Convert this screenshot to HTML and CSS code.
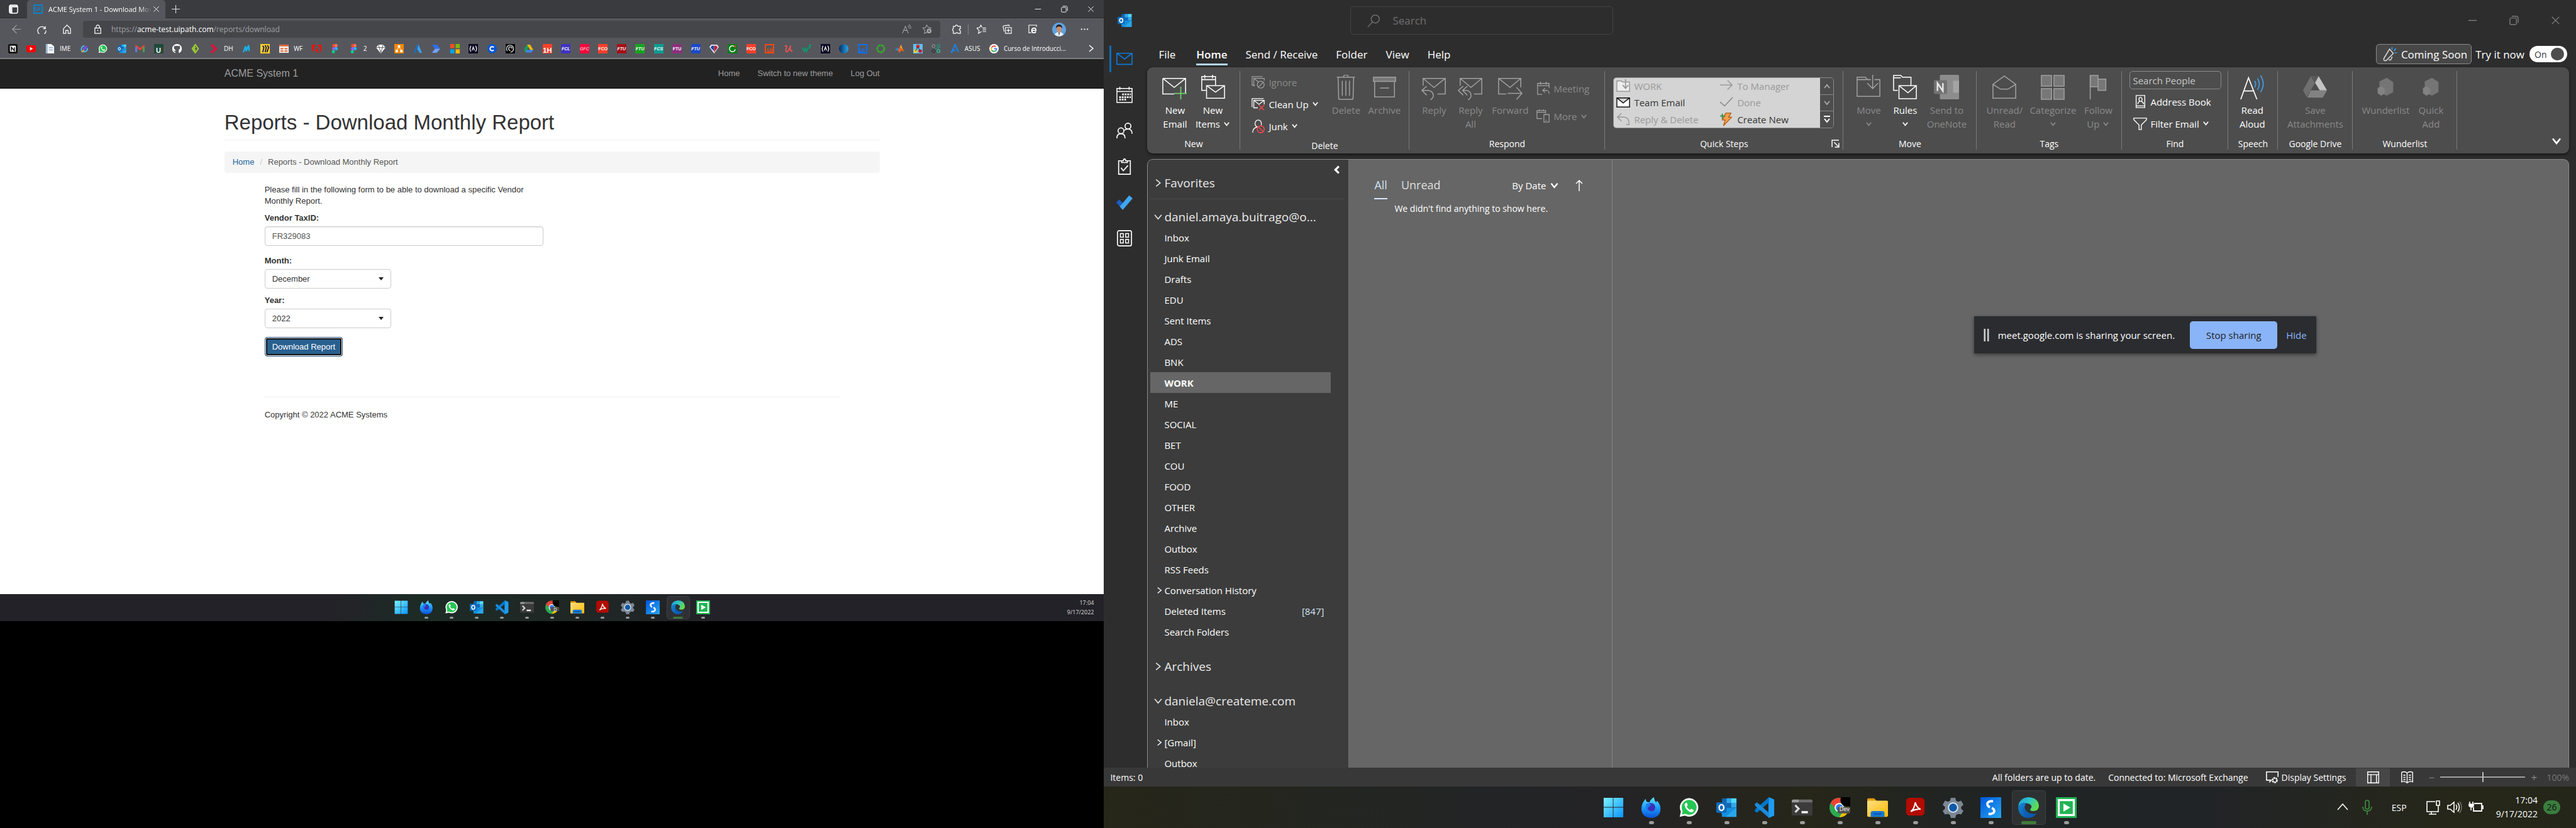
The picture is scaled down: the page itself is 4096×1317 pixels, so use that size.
FILE: index.html
```html
<!DOCTYPE html>
<html lang="en">
<head>
<meta charset="utf-8">
<title>Dual desktop</title>
<link rel="stylesheet" href="styles.css">
</head>
<body>
<svg class="sprite" aria-hidden="true">
  <defs>
    <linearGradient id="gWin" x1="0" y1="0" x2="1" y2="1"><stop offset="0" stop-color="#7cf3ff"/><stop offset="1" stop-color="#0a93ff"/></linearGradient>
    <linearGradient id="gFox" x1="0" y1="0" x2="0" y2="1"><stop offset="0" stop-color="#5fe3ff"/><stop offset=".5" stop-color="#1c9bff"/><stop offset="1" stop-color="#0a52d6"/></linearGradient>
    <linearGradient id="gFold" x1="0" y1="0" x2="1" y2="1"><stop offset="0" stop-color="#ffe083"/><stop offset="1" stop-color="#ffb900"/></linearGradient>
    <linearGradient id="gEdge" x1="0" y1="0" x2="1" y2=".5"><stop offset="0" stop-color="#1b9de2"/><stop offset=".5" stop-color="#2cc3c9"/><stop offset="1" stop-color="#62dc4c"/></linearGradient>
    <linearGradient id="gEdge2" x1="0" y1="0" x2="1" y2="1"><stop offset="0" stop-color="#1387d8"/><stop offset="1" stop-color="#0c4a9c"/></linearGradient>
    <linearGradient id="gS" x1="0" y1="0" x2="1" y2="1"><stop offset="0" stop-color="#0057e0"/><stop offset="1" stop-color="#27a7ee"/></linearGradient>
    <linearGradient id="gGlobe" x1="0" y1="0" x2="1" y2="0"><stop offset="0" stop-color="#0a2a5c"/><stop offset="1" stop-color="#25a8ec"/></linearGradient>
  </defs>
  <symbol id="t-win" viewBox="0 0 36 36"><path fill="url(#gWin)" d="M1 1h16v16H1zM18 1h17v16H18zM1 18h16v17H1zM18 18h17v17H18z"/></symbol>
  <symbol id="t-fox" viewBox="0 0 36 36"><path fill="url(#gFox)" d="M4 9l4-6 2 5 5 1q2-6 8-9 0 6 4 9l1-3q7 7 6 16-1 13-16 14Q3 35 1 22q0-8 3-13z"/><circle cx="17" cy="18" r="8" fill="#3d2fb5"/><path fill="#1a7cf0" d="M9 12q5-3 9 1l-3 3q-4 2-2 6 4 4 10 1-3 5-9 4-7-3-5-15z"/></symbol>
  <symbol id="t-wa" viewBox="0 0 36 36"><path fill="#fff" d="M2 34l2-9A16 16 0 1 1 11 32z"/><path fill="#25c653" d="M6 30l1-6a13 13 0 1 1 5 5z"/><path fill="#fff" d="M12 10q2-1 3 1l1 3-2 2q2 4 6 6l2-2 4 2q1 2-1 3-4 3-10-3-7-7-3-12z"/></symbol>
  <symbol id="t-ol" viewBox="0 0 36 36"><path fill="#1066b5" d="M10 2h25v16H10z"/><path fill="#32a9e8" d="M18 2h8v8h-8zM26 10h9v8h-9z"/><path fill="#50d9ff" d="M26 2h9v8h-9z"/><path fill="#1490df" d="M8 18h27v16H10z"/><path fill="#28a8ea" d="M35 18L16 34h19z"/><rect y="9" width="18" height="18" rx="2" fill="#0f6cbd"/><ellipse cx="9" cy="18" rx="4" ry="5" fill="none" stroke="#fff" stroke-width="2.6"/></symbol>
  <symbol id="t-code" viewBox="0 0 36 36"><path fill="#1f9cf0" d="M26 0l9 4v28l-9 4-1-1V1z"/><path fill="#0078cc" d="M26 0v9L5 27l-4-3 2-4z"/><path fill="#1a8ad9" d="M26 36v-9L5 9l-4 3 2 4z"/></symbol>
  <symbol id="t-term" viewBox="0 0 36 36"><rect y="4" width="36" height="28" rx="2" fill="#3b3b3b"/><path fill="#9c9c9c" d="M2 4h10v5H0V6z"/><path fill="#6d6d6d" d="M12 4h22l2 2v3H12z"/><path d="M6 14l6 6-6 6" fill="none" stroke="#ddd" stroke-width="3.4"/><path fill="#eee" d="M17 24h11v4H17z"/></symbol>
  <symbol id="t-chrome" viewBox="0 0 36 36"><circle cx="17" cy="18" r="17" fill="#2da94f"/><path fill="#ea4335" d="M2 10A17 17 0 0 1 32 10H17l-7 9z"/><path fill="#fbbc04" d="M32 10q5 13-5 22-4 3-10 3l8-13z"/><circle cx="17" cy="18" r="8" fill="#fff"/><circle cx="17" cy="18" r="6" fill="#3b7ded"/><rect x="14" y="17" width="22" height="11" rx="2" fill="#505050"/><circle cx="31" cy="5" r="12" fill="#000"/></symbol>
  <symbol id="t-folder" viewBox="0 0 36 36"><path fill="#e19d00" d="M0 4q0-2 2-2h10l4 4v6H0z"/><rect y="6" width="36" height="28" rx="2" fill="url(#gFold)"/><path fill="#1478d4" d="M6 34v-6q0-4 4-4h16q4 0 4 4v6z"/><path fill="#0b4f9c" d="M11 28h14v2H11z"/></symbol>
  <symbol id="t-pdf" viewBox="0 0 36 36"><rect x="2" y="1" width="32" height="31" rx="6" fill="#b30b00"/><path d="M10 25q6-4 8-16 2 9 9 12-9-1-17 4z" fill="none" stroke="#fff" stroke-width="2.2"/></symbol>
  <symbol id="t-gear" viewBox="0 0 36 36"><path fill="#7b8794" d="M14 1h8l1 5 4 2 5-2 4 7-4 4v3l4 4-4 6-5-1-4 2-1 5h-8l-1-5-4-2-5 1-4-6 4-4v-3l-4-4 4-7 5 2 4-2z"/><circle cx="18" cy="18" r="9" fill="#e4eaf0"/><circle cx="18" cy="18" r="7" fill="#0f5aa8"/></symbol>
  <symbol id="t-s" viewBox="0 0 36 36"><path fill="url(#gS)" d="M0 0h36v36H0z"/><path d="M22 7h-4q-6 1-6 5t6 6q6 2 6 6t-6 5h-4" fill="none" stroke="#fff" stroke-width="4" stroke-dasharray="20 3"/></symbol>
  <symbol id="t-edge" viewBox="0 0 36 36"><path fill="url(#gEdge)" d="M0 18Q1 1 18 0q17 1 18 15 0 9-10 9-6 0-5-3 5-6-1-9-8-4-15 0-5 3-5 6z"/><path fill="url(#gEdge2)" d="M0 18Q3 8 14 10q-5 6-1 13 6 8 19 5-6 9-17 8Q1 33 0 18z"/><path fill="#0a5cb8" d="M14 12q-7 8 0 16 5 5 17 2-8 7-16 2-11-8-1-20z"/></symbol>
  <symbol id="t-play" viewBox="0 0 36 36"><path fill="#22b455" d="M0 0h36v36H0z"/><path d="M5 5h26v26H5z" fill="none" stroke="#fff" stroke-width="3.4"/><path fill="#fff" d="M13 11l12 7-12 7z"/></symbol>

  <symbol id="r-newmail" viewBox="0 0 42 42"><path d="M1 6h38v25M1 6v26h19M1 6l19 15L39 6" fill="none" stroke="currentColor" stroke-width="1.6"/><path d="M31 20v21M20 31h21" stroke="#6fd36f" stroke-width="1.8"/></symbol>
  <symbol id="r-newitems" viewBox="0 0 42 42"><path d="M10 26H3V3h23v14M3 8h23M8 0v6M21 0v6M11 18h30v21H11zM11 18l15 11 15-11" fill="none" stroke="currentColor" stroke-width="1.6"/></symbol>
  <symbol id="r-trash" viewBox="0 0 42 42"><path d="M6 4h30M17 4q0-4 4-4t4 4M8 4l1 35q0 2 2 2h20q2 0 2-2l1-35M15 10v25M21 10v25M27 10v25" fill="none" stroke="currentColor" stroke-width="1.6"/></symbol>
  <symbol id="r-archive" viewBox="0 0 42 42"><path d="M3 4h37v7H3z" fill="#777"/><path d="M3 4h37v7H3zM5 11v26h33V11M14 22h15" fill="none" stroke="currentColor" stroke-width="1.6"/></symbol>
  <symbol id="r-reply" viewBox="0 0 42 42"><path d="M3 18V6h37v26H27M3 6l18 15L40 6M9 19L1 26l8 8M1 26h10q9 1 9 9 0 4-5 7" fill="none" stroke="currentColor" stroke-width="1.6"/></symbol>
  <symbol id="r-replyall" viewBox="0 0 42 42"><path d="M4 18V6h36v26H27M4 6l18 15L40 6M9 19L1 26l8 8M16 19l-8 7 8 8M9 26h5q8 1 8 9 0 4-5 7" fill="none" stroke="currentColor" stroke-width="1.6"/></symbol>
  <symbol id="r-forward" viewBox="0 0 42 42"><path d="M15 32H2V6h37v15M2 6l19 15L39 6M17 31h23M32 21l9 10-9 10" fill="none" stroke="currentColor" stroke-width="1.6"/></symbol>
  <symbol id="r-move" viewBox="0 0 42 42"><path d="M25 8H19l-3-4H2v32h38V8H31M2 8h16M28 0v22M19 14l9 9 9-9" fill="none" stroke="currentColor" stroke-width="1.6"/></symbol>
  <symbol id="r-rules" viewBox="0 0 42 42"><path d="M9 26H2V1h12l3 3h14v13M2 5h12M11 18h29v22H11zM11 18l15 12 14-12" fill="none" stroke="currentColor" stroke-width="1.6"/></symbol>
  <symbol id="r-note" viewBox="0 0 42 42"><rect x="10" y="0" width="32" height="41" rx="2" fill="#8d8d8d"/><path fill="#a4a4a4" d="M32 10h10v20H32z"/><rect x="0" y="9" width="22" height="23" rx="2" fill="#727272"/><path d="M6 27V14l9 13V14" fill="none" stroke="#e8e8e8" stroke-width="2.6"/></symbol>
  <symbol id="r-open" viewBox="0 0 42 42"><path d="M2 16v23h38V16L21 2zM2 16l13 8h12l13-8" fill="none" stroke="currentColor" stroke-width="1.6"/></symbol>
  <symbol id="r-cat" viewBox="0 0 42 42"><path d="M2 1h17v18H2zM23 1h17v18H23zM2 23h17v18H2zM23 23h17v18H23z" fill="#777" stroke="currentColor" stroke-width="1.6"/></symbol>
  <symbol id="r-flag" viewBox="0 0 42 42"><path d="M8 1h13v19H8zM21 7h13v19H21z" fill="#777" stroke="currentColor" stroke-width="1.6"/><path d="M8 1v40" stroke="currentColor" stroke-width="1.6"/></symbol>
  <symbol id="r-aloud" viewBox="0 0 42 42"><path d="M2 41L15 5l14 36M7 27h17" fill="none" stroke="currentColor" stroke-width="1.8"/><path d="M25 10q4 5 0 11M30 6q6 9 0 19M35 1q9 14 0 28" fill="none" stroke="#3f9fe8" stroke-width="1.8"/></symbol>
  <symbol id="r-drive" viewBox="0 0 42 42"><path fill="#6f6f6f" d="M14 2l7 12-14 23-6-11z"/><path fill="#c4c4c4" d="M27 2l14 24H29L21 13z"/><path fill="#5a5a5a" d="M14 2h13l-6 11z"/><path fill="#828282" d="M14 26h27l-7 12H8z"/></symbol>
  <symbol id="r-wund" viewBox="0 0 42 42"><path fill="#757575" d="M11 11L23 5l11 7v17l-11 6-6-3V21l-6 2z"/><path fill="#828282" d="M8 22l6-3 6 4v8l-6 4-6-4z"/></symbol>

  <symbol id="s-ignore" viewBox="0 0 24 24"><path d="M6 17H1V2h18M4 19V5h18v4M4 5l9 7" fill="none" stroke="currentColor" stroke-width="1.4"/><circle cx="16" cy="16" r="6" fill="#4d4d4d" stroke="currentColor" stroke-width="1.4"/><path d="M12 20l8-8" stroke="currentColor" stroke-width="1.4"/></symbol>
  <symbol id="s-clean" viewBox="0 0 24 24"><path d="M1 17V2h20M11 18H4V5h18v7M4 5l9 7 9-7" fill="none" stroke="currentColor" stroke-width="1.4"/><path d="M13 13l9 9M22 13l-9 9" stroke="#f0484d" stroke-width="1.6"/></symbol>
  <symbol id="s-junk" viewBox="0 0 24 24"><path d="M2 23q0-8 8-10-4-2-4-6 1-6 6-6 5 1 5 6v3" fill="none" stroke="currentColor" stroke-width="1.4"/><circle cx="16" cy="17" r="6" fill="none" stroke="#f0484d" stroke-width="1.8"/><path d="M12 13l8 8" stroke="#f0484d" stroke-width="1.8"/></symbol>
  <symbol id="s-meet" viewBox="0 0 24 24"><path d="M10 22H2V3h20v8M2 7h20M7 0v5M17 0v5M15 11l-4 4 4 4M11 15h7q4 1 4 6" fill="none" stroke="currentColor" stroke-width="1.4"/></symbol>
  <symbol id="s-more" viewBox="0 0 24 24"><path d="M10 16H1V2h15v5M1 5h15M5 0v3M12 0v3M13 9h9v13h-9zM16 19h2" fill="none" stroke="currentColor" stroke-width="1.4"/></symbol>
  <symbol id="s-book" viewBox="0 0 24 24"><path d="M5 1h15v21H5zM5 19h15M8 16q0-4 4-5-3-2-2-5 2-3 4-1 3 3 0 6 4 2 4 5" fill="none" stroke="currentColor" stroke-width="1.5"/></symbol>
  <symbol id="s-filter" viewBox="0 0 24 24"><path d="M1 2h22v3l-9 9v8h-4v-8L1 5z" fill="none" stroke="currentColor" stroke-width="1.5"/></symbol>
  <symbol id="q-work" viewBox="0 0 24 24"><path d="M1 3h8l2 2h12v16H1z" fill="#eee" stroke="#999" stroke-width="1.6"/><path d="M16 0v14M11 10l5 6 5-6" fill="none" stroke="#999" stroke-width="2"/></symbol>
  <symbol id="q-team" viewBox="0 0 24 24"><path d="M1 4h22v16H1zM1 4l11 9 11-9" fill="#fff" stroke="#111" stroke-width="1.6"/></symbol>
  <symbol id="q-reply" viewBox="0 0 24 24"><path d="M9 1L2 8l7 7M2 8h12q9 1 8 13h-5" fill="none" stroke="#999" stroke-width="1.6"/></symbol>
  <symbol id="q-arrow" viewBox="0 0 24 24"><path d="M1 10h21M14 2l8 8-8 8" fill="none" stroke="#999" stroke-width="1.6"/></symbol>
  <symbol id="q-check" viewBox="0 0 24 24"><path d="M1 11l8 7L23 3" fill="none" stroke="#888" stroke-width="1.6"/></symbol>
  <symbol id="q-bolt" viewBox="0 0 24 24"><path d="M11 1h9l-4 7h5L7 23l3-10H5z" fill="#f5a04a" stroke="#b3590f" stroke-width="1.4"/><path d="M5 2v9M1 6h9" stroke="#1f8a3b" stroke-width="1.8"/></symbol>

  <symbol id="n-mail" viewBox="0 0 28 28"><path d="M1 4h26v19H1zM1 4l13 10L27 4" fill="none" stroke="currentColor" stroke-width="1.8"/></symbol>
  <symbol id="n-cal" viewBox="0 0 28 28"><path d="M1 3h26v24H1zM1 8h26M6 0v5M22 0v5" fill="none" stroke="currentColor" stroke-width="1.6"/><path d="M10 13h15M5 18h20M5 22h13" stroke="currentColor" stroke-width="3" stroke-dasharray="3 1.4"/></symbol>
  <symbol id="n-people" viewBox="0 0 28 28"><circle cx="20" cy="6" r="5" fill="none" stroke="currentColor" stroke-width="1.8"/><circle cx="8" cy="14" r="5" fill="none" stroke="currentColor" stroke-width="1.8"/><path d="M1 27q0-8 7-8t7 8M14 13q2-2 6-2 7 0 7 8" fill="none" stroke="currentColor" stroke-width="1.8"/></symbol>
  <symbol id="n-task" viewBox="0 0 28 28"><path d="M9 4H4v23h20V4h-5M9 7V4h3q0-3 2-3t2 3h3v3zM8 16l4 5 8-9" fill="none" stroke="currentColor" stroke-width="1.8"/></symbol>
  <symbol id="n-todo" viewBox="0 0 28 28"><path fill="#1d5ec4" d="M0 14l5-5 8 8-5 6z"/><path fill="#40a6f0" d="M6 21L22 2l6 5-17 20z"/></symbol>
  <symbol id="n-apps" viewBox="0 0 28 28"><rect x="2" y="1" width="24" height="26" rx="3" fill="none" stroke="currentColor" stroke-width="1.8"/><path d="M7 6h5v6H7zM16 6h5v6h-5zM7 16h5v6H7zM16 16h5v6h-5z" fill="none" stroke="currentColor" stroke-width="1.6"/></symbol>

  <symbol id="c-down" viewBox="0 0 12 12"><path d="M2 3l4 5 4-5" fill="none" stroke="currentColor" stroke-width="1.8"/></symbol>
  <symbol id="c-up" viewBox="0 0 12 12"><path d="M2 9l4-5 4 5" fill="none" stroke="currentColor" stroke-width="1.8"/></symbol>
  <symbol id="c-right" viewBox="0 0 12 12"><path d="M3 1l6 5-6 5" fill="none" stroke="currentColor" stroke-width="1.5"/></symbol>
  <symbol id="c-left" viewBox="0 0 12 12"><path d="M9 1L4 6l5 5" fill="none" stroke="currentColor" stroke-width="3"/></symbol>
  <symbol id="c-x" viewBox="0 0 16 16"><path d="M2 2l12 12M14 2L2 14" stroke="currentColor" stroke-width="1.3"/></symbol>
  <symbol id="c-min" viewBox="0 0 16 16"><path d="M1 8h14" stroke="currentColor" stroke-width="1.3"/></symbol>
  <symbol id="c-rest" viewBox="0 0 16 16"><rect x="1" y="4" width="11" height="11" rx="2" fill="none" stroke="currentColor" stroke-width="1.3"/><path d="M4 1h7q4 0 4 4v7" fill="none" stroke="currentColor" stroke-width="1.3"/></symbol>

  <symbol id="e-tabs" viewBox="0 0 16 16"><rect x="1" y="1" width="14" height="14" rx="3" fill="none" stroke="#fff" stroke-width="1.6"/><path fill="#fff" d="M1 2h14v3H6v10H1z" opacity=".9"/></symbol>
  <symbol id="e-back" viewBox="0 0 16 16"><path d="M15 8H1M8 1L1 8l7 7" fill="none" stroke="currentColor" stroke-width="1.2"/></symbol>
  <symbol id="e-reload" viewBox="0 0 16 16"><path d="M14 3v4h-4M14 7a7 7 0 1 0 1 3" fill="none" stroke="currentColor" stroke-width="1.3"/></symbol>
  <symbol id="e-home" viewBox="0 0 16 16"><path d="M2 7l6-6 6 6v8h-4v-5H6v5H2z" fill="none" stroke="currentColor" stroke-width="1.3"/></symbol>
  <symbol id="e-lock" viewBox="0 0 16 16"><path d="M3 6h10v9H3zM5 6q0-5 3-5t3 5" fill="none" stroke="currentColor" stroke-width="1.3"/><circle cx="8" cy="10" r="1" fill="currentColor"/></symbol>
  <symbol id="e-read" viewBox="0 0 16 16"><path d="M1 15L6 3l5 12M3 10h6M10 2q3 2 2 5M12 0q4 3 3 7" fill="none" stroke="currentColor" stroke-width="1.1"/></symbol>
  <symbol id="e-star" viewBox="0 0 16 16"><path d="M8 13l-5 2 1-5-4-4 5-1 2-4 3 4 5 1" fill="none" stroke="currentColor" stroke-width="1.1"/><circle cx="11" cy="11" r="4" fill="#aaa"/><path d="M9 11h4M11 9v4" stroke="#45464a"/></symbol>
  <symbol id="e-ext" viewBox="0 0 16 16"><path d="M5 3q2-4 5 0h4v4q-4 1 0 4v4h-4q-2-3-4 0H2v-4q-3-2 0-4V3z" fill="none" stroke="currentColor" stroke-width="1.3"/></symbol>
  <symbol id="e-fav" viewBox="0 0 16 16"><path d="M8 12l-5 3 1-5-4-4 5-1 2-4 2 4M10 6h6M10 9h6M10 12h6" fill="none" stroke="currentColor" stroke-width="1.2"/></symbol>
  <symbol id="e-coll" viewBox="0 0 16 16"><path d="M5 5h10v10H5zM10 7v6M7 10h6M3 12L1 4q0-2 2-2l8-1 1 2" fill="none" stroke="currentColor" stroke-width="1.2"/></symbol>
  <symbol id="e-ie" viewBox="0 0 16 16"><path d="M5 14H1V1h13v3" fill="none" stroke="currentColor" stroke-width="1.2"/><path d="M5 10h8q0-4-3-4-4 0-4 4t4 4q2 0 3-2" fill="none" stroke="#fff" stroke-width="2"/></symbol>
  <symbol id="e-me" viewBox="0 0 22 22"><circle cx="11" cy="11" r="11" fill="#5fa2e2"/><path fill="#e9eef5" d="M4 19q2-4 7-4t7 4q-7 6-14 0z"/><ellipse cx="11" cy="10" rx="4" ry="6" fill="#c98e6c"/><path fill="#221a17" d="M6 9q0-6 5-6t5 6q-2-3-5-3T6 9z"/><path fill="#26405f" d="M10 16h2l-1 5z"/></symbol>

  <symbol id="b-notion" viewBox="0 0 16 16"><rect width="16" height="16" rx="3" fill="#111"/><path d="M3 3h9l1 1v9H4L3 12z" fill="#fff"/><path d="M5.500 11.500V5.500l5 6v-6" fill="none" stroke="#111" stroke-width="1.600"/></symbol>
  <symbol id="b-yt" viewBox="0 0 16 16"><rect y="2" width="16" height="12" rx="3" fill="#f00"/><path fill="#fff" d="M6 5l5 3-5 3z"/></symbol>
  <symbol id="b-doc" viewBox="0 0 16 16"><path fill="#f2f6fa" d="M1 0h9l5 4v12H1z"/><path fill="#9fb6cc" d="M1 0h3v16H1zM6 5h7v2H6zM6 9h7v2H6z"/></symbol>
  <symbol id="b-swirl" viewBox="0 0 16 16"><path d="M3 12Q1 4 8 3M5 13q8 1 8-6" fill="none" stroke="#46c8e8" stroke-width="2"/><path d="M5 11Q5 5 12 2q1 6-4 9" fill="#7a4cf0"/><path d="M3 14l4-4" stroke="#f5a13a" stroke-width="2"/></symbol>
  <symbol id="b-gmail" viewBox="0 0 16 16"><path d="M2 13V4l6 5 6-5v9" fill="none" stroke="#ea4335" stroke-width="3"/><path fill="#4285f4" d="M0 5h3v9H0z"/><path fill="#34a853" d="M13 5h3v9h-3z"/></symbol>
  <symbol id="b-gh" viewBox="0 0 16 16"><path fill="#fff" d="M8 0a8 8 0 0 0-3 15.500V13q-2 .5-3-2 2 1 3 .5L5.500 10Q2 9 3 5L3 3l2 .5q3-1 6 0L13 3v2q1 4-2.500 5l.5 1v4.500A8 8 0 0 0 8 0z"/></symbol>
  <symbol id="b-gd" viewBox="0 0 16 16"><path d="M8 1l5 7-5 7-5-7zM8 5L6 8l2 4" fill="none" stroke="#9bcf2f" stroke-width="2.200"/></symbol>
  <symbol id="b-red" viewBox="0 0 16 16"><path d="M3 1l8 7-8 7" fill="none" stroke="#d9143f" stroke-width="4"/></symbol>
  <symbol id="b-m" viewBox="0 0 16 16"><path d="M2 14L6 4l1 8 4-10 1 10" fill="none" stroke="#19b1ea" stroke-width="2.600"/></symbol>
  <symbol id="b-miro" viewBox="0 0 16 16"><path fill="#ffd02f" d="M0 0h16v16H0z"/><path d="M4 3l2 3-2 8M8 2l2 4-2 8M12 2l2 4-3 8" fill="none" stroke="#1b1a3d" stroke-width="2"/></symbol>
  <symbol id="b-wf" viewBox="0 0 16 16"><path fill="#f4efe9" d="M0 1h16v14H0z"/><path fill="#e0643a" d="M0 1h16v3H0zM2 7h5v2H2zM2 11h5v2H2zM9 7h5v2H9zM9 11h5v2H9z"/></symbol>
  <symbol id="b-adobe" viewBox="0 0 16 16"><path fill="#f40f02" d="M0 1h6L0 15zM10 1h6v14zM8 6l4 9H9l-1-3H5z"/></symbol>
  <symbol id="b-figma" viewBox="0 0 16 16"><path fill="#f24e1e" d="M8 0H6a2.600 2.600 0 0 0 0 5.300h2z"/><path fill="#ff7262" d="M8 0h2a2.600 2.600 0 0 1 0 5.300H8z"/><path fill="#a259ff" d="M8 5.300H6a2.600 2.600 0 0 0 0 5.300h2z"/><circle cx="10.500" cy="8" r="2.600" fill="#1abcfe"/><path fill="#0acf83" d="M8 10.600H6A2.600 2.600 0 1 0 8 13z"/></symbol>
  <symbol id="b-gem" viewBox="0 0 16 16"><path fill="#fff" d="M4 1h8l4 5-8 10L0 6z"/><path d="M0 6h16M4 1l4 14 4-14" fill="none" stroke="#555"/></symbol>
  <symbol id="b-draw" viewBox="0 0 16 16"><path fill="#f08705" d="M0 0h16v16H0z"/><path d="M8 5l-4 6M8 5l4 6" stroke="#fff"/><path fill="#fff" d="M6 2h4v4H6zM2 10h4v4H2zM10 10h4v4h-4z"/></symbol>
  <symbol id="b-az" viewBox="0 0 16 16"><path fill="#1a6fc4" d="M6 1h3L4 15H1z"/><path fill="#3aa3ec" d="M9 1l6 14H7l4-1-4-5z"/></symbol>
  <symbol id="b-flow" viewBox="0 0 16 16"><path fill="#2f6ef0" d="M1 1h8l6 7H6z"/><path fill="#6fa2ff" d="M6 8h9l-6 7H1z"/></symbol>
  <symbol id="b-ms" viewBox="0 0 16 16"><path fill="#f25022" d="M0 0h7v7H0z"/><path fill="#7fba00" d="M9 0h7v7H9z"/><path fill="#00a4ef" d="M0 9h7v7H0z"/><path fill="#ffb900" d="M9 9h7v7H9z"/></symbol>
  <symbol id="b-fcc" viewBox="0 0 16 16"><path fill="#0a0a23" d="M0 0h16v16H0z"/><path d="M4 3q-3 5 0 10M12 3q3 5 0 10M6 11l2-6 2 6" fill="none" stroke="#fff" stroke-width="1.300"/></symbol>
  <symbol id="b-c" viewBox="0 0 16 16"><circle cx="8" cy="8" r="8" fill="#0056d2"/><path d="M11 5.500q-3-2-5.500 0-2 3 0 5 2.500 2 5.500 0" fill="none" stroke="#fff" stroke-width="2"/></symbol>
  <symbol id="b-spiral" viewBox="0 0 16 16"><path fill="#000" d="M0 0h16v16H0z"/><path d="M3 12a6 6 0 1 1 5 2M8 11a3 3 0 1 1 3-3" fill="none" stroke="#ddd" stroke-width="1.400"/></symbol>
  <symbol id="b-drive" viewBox="0 0 16 16"><path fill="#12a15e" d="M5.500 1L8 5l-5 9-3-4z"/><path fill="#fbbc04" d="M5.500 1h5L16 10h-5z"/><path fill="#4285f4" d="M5 10h11l-3 4.500H3z"/></symbol>
  <symbol id="b-nba" viewBox="0 0 16 16"><path fill="#e8e8f2" d="M3 1h10l3 4-8 11L0 5z"/><path fill="#c8203a" d="M8 3h4l2 3-6 8z"/><path fill="#1d4aa5" d="M4 3h4v9L2 6z"/></symbol>
  <symbol id="b-refresh" viewBox="0 0 16 16"><path fill="#0b7d18" d="M0 0h16v16H0z"/><path d="M11 4a5 5 0 1 0 2 5" fill="none" stroke="#fff" stroke-width="1.500"/><path fill="#f33" d="M12 2h2v4h-2z"/></symbol>
  <symbol id="b-udemy" viewBox="0 0 16 16"><path d="M2 4q4-3 3 2-3 8 1 7 3-2 6-10-3 9 3 9" fill="none" stroke="#ec5252" stroke-width="2"/></symbol>
  <symbol id="b-w3" viewBox="0 0 16 16"><path d="M1 6l3 7 2-6 2 6 3-7M12 2h3l-2 2q3 2-1 3" fill="none" stroke="#04a070" stroke-width="1.800"/></symbol>
  <symbol id="b-globe" viewBox="0 0 16 16"><circle cx="8" cy="8" r="8" fill="url(#gGlobe)"/></symbol>
  <symbol id="b-ring" viewBox="0 0 16 16"><circle cx="8" cy="8" r="6" fill="none" stroke="#37a72a" stroke-width="3" stroke-dasharray="5 .6"/></symbol>
  <symbol id="b-matlab" viewBox="0 0 16 16"><path fill="#2b87c8" d="M0 9l5-3 3 3-3 3z"/><path fill="#e2641c" d="M5 11l5-10 6 12-5-2-3 4z"/><path fill="#f7b24b" d="M9 5l1-4 3 8z"/></symbol>
  <symbol id="b-figure" viewBox="0 0 16 16"><path fill="#5fc0ef" d="M0 0h16v16H0z"/><circle cx="8" cy="4" r="3" fill="#e3202c"/><circle cx="4" cy="12" r="3" fill="#f7d21b"/><circle cx="12" cy="12" r="3" fill="#d11f33"/><path d="M8 5L4 12M8 5l4 7" stroke="#222"/></symbol>
  <symbol id="b-cmd" viewBox="0 0 16 16"><circle cx="3.500" cy="3.500" r="2.500" fill="none" stroke="#888" stroke-width="1.300"/><circle cx="12" cy="3.500" r="2.500" fill="none" stroke="#1d9a86" stroke-width="1.300"/><circle cx="3.500" cy="12" r="2.500" fill="none" stroke="#333" stroke-width="1.300"/><circle cx="12" cy="12" r="2.500" fill="none" stroke="#2cc0a5" stroke-width="1.300"/><path d="M5 8h7" stroke="#1d9a86"/></symbol>
  <symbol id="b-asus" viewBox="0 0 16 16"><path d="M2 15L8 1l6 13M1 13l8-3" fill="none" stroke="#1585f0" stroke-width="2"/></symbol>
  <symbol id="b-g" viewBox="0 0 16 16"><circle cx="8" cy="8" r="8" fill="#fff"/><path d="M11 4.500A4.500 4.500 0 0 0 4 6" fill="none" stroke="#ea4335" stroke-width="2"/><path d="M4 6q-1 2 0 4.500" fill="none" stroke="#fbbc04" stroke-width="2"/><path d="M4 10.500q3 3.500 7 1" fill="none" stroke="#34a853" stroke-width="2"/><path d="M11 11.500q1.500-1.500 1.500-3.500H8" fill="none" stroke="#4285f4" stroke-width="2"/></symbol>
</svg>

<main class="desktops">
  <section class="screen screen-left">
    <div class="browser">
      <header class="tabstrip">
        <button class="ib tabs-menu" aria-label="Tab actions"><svg><use href="#e-tabs"/></svg></button>
        <div class="tab"><span class="ui-fav">Ui</span><span class="tab-title">ACME System 1 - Download Mon</span><button class="ib tab-x" aria-label="Close tab"><svg><use href="#c-x"/></svg></button></div>
        <button class="ib new-tab" aria-label="New tab">
          <svg viewBox="0 0 16 16"><path d="M8 1v14M1 8h14" stroke="#ddd" stroke-width="1.2"/></svg></button>
        <div class="winctl"><button class="ib" aria-label="Minimize"><svg><use href="#c-min"/></svg></button><button class="ib" aria-label="Restore"><svg><use href="#c-rest"/></svg></button><button class="ib" aria-label="Close"><svg><use href="#c-x"/></svg></button></div>
      </header>
      <div class="toolbar">
        <div class="nav-btns"><button class="ib dim" aria-label="Back"><svg><use href="#e-back"/></svg></button><button class="ib" aria-label="Reload"><svg><use href="#e-reload"/></svg></button><button class="ib" aria-label="Home"><svg><use href="#e-home"/></svg></button></div>
        <div class="address"><svg><use href="#e-lock"/></svg><span class="url">https://<b>acme-test.uipath.com</b>/reports/download</span><button class="ib dim" aria-label="Read aloud"><svg><use href="#e-read"/></svg></button><button class="ib dim" aria-label="Add favorite"><svg><use href="#e-star"/></svg></button></div>
        <div class="tools"><button class="ib" aria-label="Extensions"><svg><use href="#e-ext"/></svg></button><i class="vbar"></i><button class="ib" aria-label="Favorites"><svg><use href="#e-fav"/></svg></button><button class="ib" aria-label="Collections"><svg><use href="#e-coll"/></svg></button><button class="ib" aria-label="IE mode"><svg><use href="#e-ie"/></svg></button><button class="ib me" aria-label="Profile"><svg><use href="#e-me"/></svg></button><button class="ib" aria-label="More"><svg viewBox="0 0 16 16"><path d="M2 8h2M7 8h2M12 8h2" stroke="#fff" stroke-width="2"/></svg></button></div>
      </div>
      <nav class="bookmarks" aria-label="Bookmarks">
        <div class="marks">
        <a href="#"><svg><use href="#b-notion"/></svg></a><a href="#"><svg><use href="#b-yt"/></svg></a><a href="#"><svg><use href="#b-doc"/></svg>IME</a><a href="#"><svg><use href="#b-swirl"/></svg></a><a href="#"><svg><use href="#t-wa"/></svg></a><a href="#"><svg><use href="#t-ol"/></svg></a><a href="#"><svg><use href="#b-gmail"/></svg></a><a href="#" class="tile big c-u">U</a><a href="#"><svg><use href="#b-gh"/></svg></a><a href="#"><svg><use href="#b-gd"/></svg></a><a href="#"><svg><use href="#b-red"/></svg>DH</a><a href="#"><svg><use href="#b-m"/></svg></a><a href="#"><svg><use href="#b-miro"/></svg></a><a href="#"><svg><use href="#b-wf"/></svg>WF</a><a href="#"><svg><use href="#b-adobe"/></svg></a><a href="#"><svg><use href="#b-figma"/></svg></a><a href="#"><svg><use href="#b-figma"/></svg>2</a><a href="#"><svg><use href="#b-gem"/></svg></a><a href="#"><svg><use href="#b-draw"/></svg></a><a href="#"><svg><use href="#b-az"/></svg></a><a href="#"><svg><use href="#b-flow"/></svg></a><a href="#"><svg><use href="#b-ms"/></svg></a><a href="#"><svg><use href="#b-fcc"/></svg></a><a href="#"><svg><use href="#b-c"/></svg></a><a href="#"><svg><use href="#b-spiral"/></svg></a><a href="#"><svg><use href="#b-drive"/></svg></a><a href="#" class="tile big c-or">1H</a><a href="#" class="tile it c-ind">FCL</a><a href="#" class="tile it c-rose">GFC</a><a href="#" class="tile c-or">FCO</a><a href="#" class="tile it c-dred">FTU</a><a href="#" class="tile it c-grn">FTU</a><a href="#" class="tile it c-teal">FCS</a><a href="#" class="tile c-pur">FTU</a><a href="#" class="tile it c-blu">FTU</a><a href="#"><svg><use href="#b-nba"/></svg></a><a href="#"><svg><use href="#b-refresh"/></svg></a><a href="#" class="tile c-or">FCO</a><a href="#" class="tile big c-ui">Ui</a><a href="#"><svg><use href="#b-udemy"/></svg></a><a href="#"><svg><use href="#b-w3"/></svg></a><a href="#"><svg><use href="#b-fcc"/></svg></a><a href="#"><svg><use href="#b-globe"/></svg></a><a href="#" class="tile big c-ui2">Ui</a><a href="#"><svg><use href="#b-ring"/></svg></a><a href="#"><svg><use href="#b-matlab"/></svg></a><a href="#"><svg><use href="#b-figure"/></svg></a><a href="#"><svg><use href="#b-cmd"/></svg></a><a href="#"><svg><use href="#b-asus"/></svg>ASUS</a><a href="#"><svg><use href="#b-g"/></svg>Curso de Introducci...</a>
        </div>
        <button class="ib" aria-label="More bookmarks"><svg><use href="#c-right"/></svg></button>
      </nav>
      <div class="page">
        <div class="navbar"><div class="container"><a class="brand" href="#">ACME System 1</a><a href="#">Home</a><a href="#">Switch to new theme</a><a href="#">Log Out</a></div></div>
        <div class="container body">
          <h1>Reports - Download Monthly Report</h1>
          <nav class="crumbs"><a href="#">Home</a><span class="slash">/</span><span>Reports - Download Monthly Report</span></nav>
          <form class="form">
            <p>Please fill in the following form to be able to download a specific Vendor<br>Monthly Report.</p>
            <label for="tax">Vendor TaxID:</label>
            <input id="tax" type="text" value="FR329083">
            <label for="month">Month:</label>
            <span class="sel"><select id="month"><option>December</option></select></span>
            <label for="year">Year:</label>
            <span class="sel"><select id="year"><option>2022</option></select></span>
            <button type="button" class="download">Download Report</button>
          </form>
          <footer>Copyright © 2022 ACME Systems</footer>
        </div>
      </div>
    </div>
    <div class="taskbar small">
      <div class="apps"><button aria-label="Start"><svg><use href="#t-win"/></svg></button><button class="run" aria-label="Firefox"><svg><use href="#t-fox"/></svg></button><button class="run" aria-label="WhatsApp"><svg><use href="#t-wa"/></svg></button><button class="run" aria-label="Outlook"><svg><use href="#t-ol"/></svg></button><button class="run" aria-label="Code"><svg><use href="#t-code"/></svg></button><button class="run" aria-label="Terminal"><svg><use href="#t-term"/></svg></button><button class="run chrome" aria-label="Chrome"><svg><use href="#t-chrome"/></svg><span class="dev">D</span></button><button class="run" aria-label="Files"><svg><use href="#t-folder"/></svg></button><button class="run" aria-label="Acrobat"><svg><use href="#t-pdf"/></svg></button><button class="run" aria-label="Settings"><svg><use href="#t-gear"/></svg></button><button class="run" aria-label="Studio"><svg><use href="#t-s"/></svg></button><button class="run active" aria-label="Edge"><svg><use href="#t-edge"/></svg></button><button class="run" aria-label="Player"><svg><use href="#t-play"/></svg></button></div>
      <div class="tray"><div class="clock"><span>17:04</span><span>9/17/2022</span></div></div>
    </div>
  </section>

  <section class="screen screen-right">
    <div class="outlook">
      <header class="ol-title">
        <svg class="ol-logo"><use href="#t-ol"/></svg>
        <label class="ol-search"><svg viewBox="0 0 24 24"><circle cx="15" cy="9" r="7" fill="none" stroke="currentColor" stroke-width="1.4"/><path d="M10 14l-8 9" stroke="currentColor" stroke-width="1.4"/></svg><input type="search" placeholder="Search" aria-label="Search"></label>
        <div class="winctl"><button class="ib" aria-label="Minimize"><svg><use href="#c-min"/></svg></button><button class="ib" aria-label="Restore"><svg><use href="#c-rest"/></svg></button><button class="ib" aria-label="Close"><svg><use href="#c-x"/></svg></button></div>
      </header>
      <div class="ol-main">
        <nav class="rail" aria-label="Modules"><a href="#" class="on" aria-label="Mail"><svg><use href="#n-mail"/></svg></a><a href="#" aria-label="Calendar"><svg><use href="#n-cal"/></svg></a><a href="#" aria-label="People"><svg><use href="#n-people"/></svg></a><a href="#" aria-label="Tasks"><svg><use href="#n-task"/></svg></a><a href="#" aria-label="To Do"><svg><use href="#n-todo"/></svg></a><a href="#" aria-label="Apps"><svg><use href="#n-apps"/></svg></a></nav>
        <div class="ol-col">
          <div class="menubar">
            <nav class="menu"><a href="#">File</a><a href="#" class="on">Home</a><a href="#">Send / Receive</a><a href="#">Folder</a><a href="#">View</a><a href="#">Help</a></nav>
            <button class="soon"><svg viewBox="0 0 24 24"><path d="M3 19L12 4l6 7-11 11q-5 2-4-3zM11 21q4 2 5-5" fill="none" stroke="#ddd" stroke-width="1.5"/><path d="M16 5V1M19 7l3-4M20 10h4" stroke="#3f9fe8" stroke-width="1.6"/></svg>Coming Soon</button>
            <span class="try">Try it now</span>
            <label class="switch"><span>On</span><input type="checkbox" checked aria-label="Try it now"></label>
          </div>
          <div class="ribbon">
            <div class="grp g-new"><div class="items"><button class="big w60"><svg><use href="#r-newmail"/></svg>New<br>Email</button><button class="big w60"><svg><use href="#r-newitems"/></svg>New<span>Items <svg class="dd"><use href="#c-down"/></svg></span></button></div><h2>New</h2></div>
            <div class="grp g-del"><div class="items"><div class="stack"><button class="off"><svg><use href="#s-ignore"/></svg>Ignore</button><button><svg><use href="#s-clean"/></svg>Clean Up<svg class="dd"><use href="#c-down"/></svg></button><button><svg><use href="#s-junk"/></svg>Junk<svg class="dd"><use href="#c-down"/></svg></button></div><button class="big off w56"><svg><use href="#r-trash"/></svg>Delete</button><button class="big off w66"><svg><use href="#r-archive"/></svg>Archive</button></div><h2>Delete</h2></div>
            <div class="grp g-resp"><div class="items"><button class="big off w56"><svg><use href="#r-reply"/></svg>Reply</button><button class="big off w60"><svg><use href="#r-replyall"/></svg>Reply<br>All</button><button class="big off w66"><svg><use href="#r-forward"/></svg>Forward</button><div class="stack two"><button class="off"><svg><use href="#s-meet"/></svg>Meeting</button><button class="off"><svg><use href="#s-more"/></svg>More<svg class="dd"><use href="#c-down"/></svg></button></div></div><h2>Respond</h2></div>
            <div class="grp g-quick"><div class="items"><div class="gallery"><div class="cells"><button class="off"><svg><use href="#q-work"/></svg>WORK</button><button class="off"><svg><use href="#q-arrow"/></svg>To Manager</button><button><svg><use href="#q-team"/></svg>Team Email</button><button class="off"><svg><use href="#q-check"/></svg>Done</button><button class="off"><svg><use href="#q-reply"/></svg>Reply &amp; Delete</button><button><svg><use href="#q-bolt"/></svg>Create New</button></div><div class="gscroll"><button aria-label="Up"><svg><use href="#c-up"/></svg></button><button aria-label="Down"><svg><use href="#c-down"/></svg></button><button class="lit" aria-label="All"><svg viewBox="0 0 12 12"><path d="M1 1h10M2 5l4 5 4-5" fill="none" stroke="currentColor" stroke-width="2"/></svg></button></div></div></div><h2><span>Quick Steps</span><svg viewBox="0 0 12 12"><path d="M1 11V1h10M4 4l6 6M11 5v6H5" fill="none" stroke="#fff" stroke-width="1.4"/></svg></h2></div>
            <div class="grp g-move"><div class="items"><button class="big off w60"><svg><use href="#r-move"/></svg>Move<svg class="dd"><use href="#c-down"/></svg></button><button class="big w56"><svg><use href="#r-rules"/></svg>Rules<svg class="dd"><use href="#c-down"/></svg></button><button class="big off w76"><svg><use href="#r-note"/></svg>Send to<br>OneNote</button></div><h2>Move</h2></div>
            <div class="grp g-tags"><div class="items"><button class="big off w70"><svg><use href="#r-open"/></svg>Unread/<br>Read</button><button class="big off w84"><svg><use href="#r-cat"/></svg>Categorize<svg class="dd"><use href="#c-down"/></svg></button><button class="big off w60"><svg><use href="#r-flag"/></svg>Follow<span>Up <svg class="dd"><use href="#c-down"/></svg></span></button></div><h2>Tags</h2></div>
            <div class="grp g-find"><div class="items"><div class="stack"><input type="text" placeholder="Search People" aria-label="Search People"><button><svg><use href="#s-book"/></svg>Address Book</button><button><svg><use href="#s-filter"/></svg>Filter Email<svg class="dd"><use href="#c-down"/></svg></button></div></div><h2>Find</h2></div>
            <div class="grp g-speech"><div class="items"><button class="big w76"><svg><use href="#r-aloud"/></svg>Read<br>Aloud</button></div><h2>Speech</h2></div>
            <div class="grp g-drive"><div class="items"><button class="big off w100"><svg><use href="#r-drive"/></svg>Save<br>Attachments</button></div><h2>Google Drive</h2></div>
            <div class="grp g-wund"><div class="items"><button class="big off w84"><svg><use href="#r-wund"/></svg>Wunderlist</button><button class="big off w60"><svg><use href="#r-wund"/></svg>Quick<br>Add</button></div><h2>Wunderlist</h2></div>
            <button class="ib fold" aria-label="Collapse ribbon"><svg><use href="#c-down"/></svg></button>
          </div>
          <div class="panes">
            <nav class="folders" aria-label="Folders">
              <button class="ib collapse" aria-label="Collapse"><svg><use href="#c-left"/></svg></button>
              <h3><svg><use href="#c-right"/></svg>Favorites</h3>
              <hr>
              <h3><svg class="rot"><use href="#c-right"/></svg>daniel.amaya.buitrago@o...</h3>
              <ul>
                <li><a href="#">Inbox</a></li><li><a href="#">Junk Email</a></li><li><a href="#">Drafts</a></li><li><a href="#">EDU</a></li><li><a href="#">Sent Items</a></li><li><a href="#">ADS</a></li><li><a href="#">BNK</a></li><li class="sel-row"><a href="#">WORK</a></li><li><a href="#">ME</a></li><li><a href="#">SOCIAL</a></li><li><a href="#">BET</a></li><li><a href="#">COU</a></li><li><a href="#">FOOD</a></li><li><a href="#">OTHER</a></li><li><a href="#">Archive</a></li><li><a href="#">Outbox</a></li><li><a href="#">RSS Feeds</a></li><li><svg><use href="#c-right"/></svg><a href="#">Conversation History</a></li><li><a href="#">Deleted Items</a><span>[847]</span></li><li><a href="#">Search Folders</a></li>
              </ul>
              <h3 class="gap"><svg><use href="#c-right"/></svg>Archives</h3>
              <h3 class="gap"><svg class="rot"><use href="#c-right"/></svg>daniela@createme.com</h3>
              <ul><li><a href="#">Inbox</a></li><li><svg><use href="#c-right"/></svg><a href="#">[Gmail]</a></li><li><a href="#">Outbox</a></li></ul>
            </nav>
            <section class="list">
              <div class="list-head"><a href="#" class="on">All</a><a href="#">Unread</a><button class="by">By Date<svg class="dd"><use href="#c-down"/></svg></button><button class="ib" aria-label="Sort order"><svg viewBox="0 0 16 20"><path d="M8 19V2M3 7l5-5 5 5" fill="none" stroke="currentColor" stroke-width="1.5"/></svg></button></div>
              <p>We didn't find anything to show here.</p>
            </section>
            <section class="reading"></section>
          </div>
        </div>
      </div>
      <footer class="status">
        <span class="grow">Items: 0</span><span>All folders are up to date.</span><span class="conn">Connected to: Microsoft Exchange</span>
        <button class="disp"><svg viewBox="0 0 24 24"><path d="M10 17H1V2h21v9M10 17l-4 4" fill="none" stroke="#fff" stroke-width="1.8"/><circle cx="16" cy="17" r="4" fill="none" stroke="#fff" stroke-width="3" stroke-dasharray="3 1"/></svg>Display Settings</button>
        <button class="view on" aria-label="Normal view"><svg viewBox="0 0 24 24"><path d="M2 2h20v20H2zM2 7h20M8 7v15M18 7v15" fill="none" stroke="#fff" stroke-width="1.6"/></svg></button>
        <button class="view" aria-label="Reading view"><svg viewBox="0 0 24 24"><path d="M12 4Q7 0 2 3v17q5-2 10 2 5-4 10-2V3q-5-3-10 1v18M5 8h4M5 12h4M5 16h4M15 8h4M15 12h4M15 16h4" fill="none" stroke="#fff" stroke-width="1.6"/></svg></button>
        <span class="zm">−</span><input type="range" aria-label="Zoom" min="0" max="100" value="50"><span class="zm">+</span><span class="pct">100%</span>
      </footer>
    </div>
    <div class="taskbar">
      <div class="apps"><button aria-label="Start"><svg><use href="#t-win"/></svg></button><button class="run" aria-label="Firefox"><svg><use href="#t-fox"/></svg></button><button class="run" aria-label="WhatsApp"><svg><use href="#t-wa"/></svg></button><button class="run" aria-label="Outlook"><svg><use href="#t-ol"/></svg></button><button class="run" aria-label="Code"><svg><use href="#t-code"/></svg></button><button class="run" aria-label="Terminal"><svg><use href="#t-term"/></svg></button><button class="run chrome" aria-label="Chrome"><svg><use href="#t-chrome"/></svg><span class="dev">Dev</span></button><button class="run" aria-label="Files"><svg><use href="#t-folder"/></svg></button><button class="run" aria-label="Acrobat"><svg><use href="#t-pdf"/></svg></button><button class="run" aria-label="Settings"><svg><use href="#t-gear"/></svg></button><button class="run" aria-label="Studio"><svg><use href="#t-s"/></svg></button><button class="run active" aria-label="Edge"><svg><use href="#t-edge"/></svg></button><button class="run" aria-label="Player"><svg><use href="#t-play"/></svg></button></div>
      <div class="tray">
        <svg class="tr-up" viewBox="0 0 18 18"><path d="M1 13l8-9 8 9" fill="none" stroke="#fff" stroke-width="1.5"/></svg>
        <svg class="tr-mic" viewBox="0 0 18 24"><rect x="6" y="1" width="6" height="14" rx="3" fill="none" stroke="#3f9142" stroke-width="1.6"/><path d="M2 11q0 7 7 7t7-7M9 18v6" fill="none" stroke="#3f9142" stroke-width="1.6"/></svg>
        <span class="lang">ESP</span>
        <svg viewBox="0 0 24 24"><path d="M15 3H2v16h18v-6M9 19v4M5 23h12M17 2h5v7h-5zM20 9v10" fill="none" stroke="#fff" stroke-width="1.6"/></svg>
        <svg viewBox="0 0 24 24"><path d="M1 9v6h4l6 5V4L5 9zM14 8q3 4 0 8M17 5q5 7 0 14" fill="none" stroke="#fff" stroke-width="1.6"/><path d="M20 3q6 9 0 18" fill="none" stroke="#777" stroke-width="1.4"/></svg>
        <svg viewBox="0 0 24 24"><path d="M9 6h12v12H8v-6M21 10h2v4h-2" fill="none" stroke="#fff" stroke-width="1.8"/><path d="M2 3v4M7 3v4M1 7h7v3q-3 4-7 0zM4 11v6" stroke="#fff" stroke-width="1.6" fill="#fff"/></svg>
        <div class="clock"><span>17:04</span><span>9/17/2022</span></div>
        <span class="badge">26</span>
      </div>
    </div>
    <aside class="share"><svg viewBox="0 0 10 22"><path d="M2 0v22M8 0v22" stroke="#ccc" stroke-width="3"/></svg><span>meet.google.com is sharing your screen.</span><button>Stop sharing</button><a href="#">Hide</a></aside>
  </section>
</main>
</body>
</html>
```
FILE: styles.css
```css
* { box-sizing: border-box; }
body { margin: 0; background: #000; font-family: "Open Sans", "Noto Sans", sans-serif; font-size: 15px; color: #fff; }
button, input, select { font: inherit; color: inherit; margin: 0; }
button { background: none; border: 0; padding: 0; }
a { color: inherit; text-decoration: none; }
h1, h2, h3, p, ul { margin: 0; padding: 0; font-weight: 400; list-style: none; }
svg { display: block; flex: none; overflow: visible; }
.sprite { position: absolute; width: 0; height: 0; }

.desktops { display: grid; grid-template-columns: 3fr 4fr; height: 100vh; overflow: hidden; }
.screen { display: flex; flex-direction: column; min-width: 0; min-height: 0; }
.screen-left { height: 75vh; }
.screen-right { position: relative; }
.ib { display: flex; align-items: center; justify-content: center; }

/* Browser window */
.browser { flex: 1; display: flex; flex-direction: column; min-height: 0; background: #fff; }
.browser .ib svg { width: 15px; height: 15px; }
.dim { color: #a5a6aa; }
.tabstrip { display: flex; align-items: stretch; height: 29px; background: #3a3b3f; border-bottom: 1px solid #2b2c2f; }
.tabs-menu { width: 43px; }
.tab { display: flex; align-items: center; width: 220px; height: 29px; padding: 0 8px 0 10px; background: #56575c; border-radius: 5px 5px 0 0; font-size: 11px; }
.ui-fav { width: 15px; height: 15px; border: 2px solid #0d83c9; color: #0d83c9; font: 700 9px/11px "Liberation Sans", sans-serif; text-align: center; }
.tab-title { flex: 1; margin-left: 9px; overflow: hidden; white-space: nowrap; mask-image: linear-gradient(90deg, #000 88%, transparent); }
.tab-x { width: 14px; }
.browser .tab-x svg { width: 11px; height: 11px; }
.new-tab { width: 32px; }
.winctl { display: flex; margin-left: auto; }
.tabstrip .winctl .ib { width: 42px; }
.browser .winctl svg { width: 11px; height: 11px; }
.toolbar { display: flex; align-items: center; height: 35px; background: #56575c; }
.nav-btns { display: flex; width: 132px; padding-left: 6px; }
.nav-btns .ib { width: 40px; }
.address { flex: 1; display: flex; align-items: center; height: 27px; padding: 0 4px 0 16px; background: #45464a; border-radius: 4px; font-size: 12px; color: #fff; }
.address svg { width: 15px; height: 15px; }
.url { flex: 1; margin-left: 14px; color: #9fa0a4; }
.url b { font-weight: 400; color: #fff; }
.address .ib { width: 33px; }
.tools { display: flex; align-items: center; width: 260px; padding-left: 8px; }
.tools .ib { width: 41px; }
.tools .ib:first-child { width: 36px; }
.vbar { width: 1px; height: 16px; background: #85868a; }
.browser .me svg { width: 22px; height: 22px; }
.bookmarks { display: flex; align-items: center; height: 30px; padding: 0 0 2px 13px; background: #56575c; border-bottom: 2px solid #7b7c80; font-size: 10px; }
.marks { flex: 1; display: flex; justify-content: space-between; align-items: center; }
.marks a { display: flex; align-items: center; gap: 8px; min-width: 15px; height: 15px; white-space: nowrap; }
.marks svg { width: 15px; height: 15px; }
.marks .tile { justify-content: center; width: 15px; font: 700 7px/15px "Liberation Sans", sans-serif; }
.marks .big { font-size: 11px; }
.marks .it { font-style: italic; }
.bookmarks .ib { width: 60px; padding-left: 20px; }
.bookmarks > .ib svg { width: 12px; height: 12px; }
.c-u { background: #1f4a3a; }
.c-or { background: #f5402c; }
.c-ind { background: #4034c0; }
.c-rose { background: #f5083f; color: #ffb0b8; }
.c-dred { background: #a50f18; }
.c-grn { background: #17a321; }
.c-teal { background: #0f9c92; }
.c-pur { background: #8c2f7d; }
.c-blu { background: #1a49c9; }
.marks .c-ui { border: 2px solid #f04a10; color: #f04a10; font-size: 9px; }
.marks .c-ui2 { border: 2px solid #0f6fe8; color: #0f6fe8; font-size: 9px; }

/* ACME page */
.page { flex: 1; font: 13px/18px "Liberation Sans", Arial, sans-serif; color: #333; }
.container { width: 60%; max-width: 1042px; margin: 0 auto; }
.navbar { background: #222; border-bottom: 1px solid #080808; color: #9d9d9d; }
.navbar .container { display: flex; align-items: center; gap: 28px; height: 46px; }
.brand { flex: 1; font-size: 16px; }
.body { padding-top: 35px; }
h1 { padding-bottom: 8px; border-bottom: 1px solid #eee; font-size: 33px; line-height: 38px; }
.crumbs { display: flex; gap: 9px; margin-top: 18px; padding: 8px 13px; background: #f5f5f5; border-radius: 4px; color: #555; }
.crumbs a { color: #23629b; }
.slash { color: #ccc; }
.form { display: flex; flex-direction: column; align-items: flex-start; margin: 0 64px; padding-top: 18px; }
.form p { margin-bottom: 9px; }
.form label { font-weight: 700; margin-bottom: 4px; }
.form input { width: 443px; height: 31px; margin-bottom: 15px; padding: 0 11px; border: 1px solid #ccc; border-radius: 4px; background: #fff; box-shadow: inset 0 1px 1px #00000013; color: #555; }
.sel { position: relative; width: 201px; margin-bottom: 10px; }
.sel select { appearance: none; width: 100%; height: 31px; padding: 0 11px; border: 1px solid #ccc; border-radius: 4px; background: #fff; display: block; }
.sel::after { content: ""; position: absolute; right: 12px; top: 13px; border: 4px solid transparent; border-top: 5px solid #222; border-bottom: 0; }
.download { height: 31px; margin-top: 4px; padding: 0 11px; background: #286090; border: 1px solid #204d74; border-radius: 4px; box-shadow: inset 0 0 0 1px #fff, inset 0 0 0 3px #101010; color: #fff; }
footer { margin: 0; }
.body footer { margin: 64px 64px 0; padding-top: 19px; border-top: 1px solid #eee; }

/* Taskbars */
.taskbar { display: grid; grid-template-columns: 1fr auto 1fr; align-items: stretch; height: 66px; flex: none; background: linear-gradient(90deg, #262619, #222525 25%, #242326 35%, #262619 48%, #202423 58%, #212426 75%, #262719 92%, #242619); }
.taskbar.small { height: 43px; background: linear-gradient(90deg, #232228 30%, #1d2b25 38%, #202625 55%, #232228 65%); }
.apps { grid-column: 2; display: flex; }
.apps button { position: relative; display: flex; align-items: center; justify-content: center; width: 60px; }
.apps svg { width: 33px; height: 33px; }
.small .apps button { width: 40px; }
.small .apps svg { width: 22px; height: 22px; }
.run::after { content: ""; position: absolute; bottom: 6px; left: 26px; width: 8px; height: 5px; border-radius: 3px; background: #9b9b9b; }
.small .run::after { bottom: 4px; left: 17px; width: 6px; height: 3px; }
.active::before { content: ""; position: absolute; inset: 6px 3px 5px; border-radius: 5px; background: #ffffff10; border: 1px solid #ffffff14; }
.small .active::before { inset: 3px 1px 3px 2px; }
.run.active::after { left: 18px; width: 24px; background: #3f7a3b; }
.small .run.active::after { left: 12px; width: 16px; }
.active svg { position: relative; }
.dev { position: absolute; top: 29px; left: 28px; width: 18px; font-size: 9px; line-height: 14px; text-align: center; }
.small .dev { top: 20px; left: 18px; width: 14px; font-size: 7px; line-height: 9px; }
.tray { display: flex; align-items: center; justify-content: flex-end; padding-right: 25px; }
.small .tray { padding-right: 16px; }
.tray svg { width: 24px; height: 24px; margin-left: 10px; }
.tray .tr-up { width: 18px; height: 18px; }
.tray .tr-mic { width: 18px; margin-left: 21px; }
.lang { margin: 0 20px 0 30px; font-size: 14px; }
.clock { display: flex; flex-direction: column; align-items: flex-end; margin-left: 20px; font-size: 14px; line-height: 22px; }
.small .clock { font-size: 9px; line-height: 15px; color: #ddd; }
.badge { margin-left: 9px; width: 27px; height: 22px; border-radius: 11px; background: #3a7d3e; color: #111; font-size: 14px; line-height: 22px; text-align: center; }

/* Outlook */
.outlook { flex: 1; display: flex; flex-direction: column; min-height: 0; background: #2d2d2d; }
.ol-title { display: flex; align-items: center; height: 65px; }
.ol-logo { width: 23px; height: 23px; margin-left: 22px; }
.ol-search { display: flex; align-items: center; gap: 17px; width: 418px; height: 45px; margin-left: 347px; padding-left: 25px; border: 1px solid #444; border-radius: 5px; color: #777; }
.ol-search svg { width: 22px; height: 22px; }
.ol-search input { flex: 1; min-width: 0; border: 0; background: none; font-size: 17px; outline: 0; }
.ol-search input::placeholder { color: #6f6f6f; opacity: 1; }
.ol-title .ib { width: 66px; color: #888; }
.ol-title .ib svg { width: 15px; height: 15px; }
.ol-main { flex: 1; display: flex; min-height: 0; }
.rail { width: 69px; flex: none; }
.rail a { position: relative; display: flex; align-items: center; justify-content: center; height: 57px; padding-right: 4px; }
.rail svg { width: 26px; height: 26px; }
.rail .on { color: #0f78d4; }
.rail .on::before { content: ""; position: absolute; left: 9px; top: 7px; bottom: 7px; width: 3px; border-radius: 2px; background: #0f6cbd; }
.ol-col { flex: 1; display: flex; flex-direction: column; min-width: 0; min-height: 0; margin-right: 11px; }
.menubar { display: flex; align-items: center; height: 42px; padding: 0 3px 0 18px; font-size: 17px; }
.menu { flex: 1; display: flex; gap: 29px; }
.menu a { line-height: 24px; padding: 6px 0 2px; border-bottom: 3px solid transparent; }
.menu .on { font-weight: 600; border-color: #b4d4f2; }
.menu a:first-child { margin-right: 4px; }
.soon { display: flex; align-items: center; gap: 6px; height: 32px; padding: 0 6px 0 8px; background: #474747; border: 1px solid #8a8a8a; border-radius: 5px; }
.soon svg { width: 25px; height: 24px; }
.try { margin: 0 8px 0 6px; }
.switch { display: flex; align-items: center; gap: 7px; width: 60px; height: 26px; padding-left: 8px; border-radius: 13px; background: #fff; color: #333; font-size: 14px; }
.switch input { appearance: none; width: 21px; height: 20px; border-radius: 10px; background: #4d4d4d; }

.ribbon { display: flex; height: 137px; flex: none; background: #4d4d4d; border-radius: 9px; box-shadow: 0 2px 5px #0008; }
.grp { display: flex; flex-direction: column; flex: none; height: 125px; margin-top: 6px; border-right: 1px solid #7a7a7a; }
.items { display: flex; height: 105px; }
.grp h2 { margin-top: 5px; font-size: 14px; line-height: 18px; text-align: center; }
.off { color: #8a8a8a; }
.big { display: flex; flex-direction: column; align-items: center; justify-content: flex-start; padding-top: 6px; line-height: 22px; white-space: nowrap; }
.big > svg { width: 40px; height: 40px; margin-bottom: 5px; }
.big span { display: flex; align-items: center; gap: 5px; }
.big.off > svg:first-child, .stack .off > svg:first-child { color: #a0a0a0; }
.stack { display: flex; flex-direction: column; }
.stack button { display: flex; align-items: center; gap: 5px; height: 35px; white-space: nowrap; }
.stack svg { width: 22px; height: 22px; }
.grp .dd { width: 11px; height: 11px; }
.big > .dd { margin: 6px 0; }
.w56 { width: 56px; } .w60 { width: 60px; } .w66 { width: 66px; } .w70 { width: 70px; } .w76 { width: 76px; } .w84 { width: 84px; } .w100 { width: 100px; }
.g-new { width: 148px; } .g-new .items { padding-left: 14px; }
.g-del { width: 269px; } .g-del .items { padding-left: 18px; } .g-del .stack { width: 122px; }
.g-resp { width: 311px; } .g-resp .items { padding-left: 11px; }
.two { padding: 6px 0 0 9px; }
.two button { height: 44px; }
.g-quick { width: 379px; } .g-quick .items { padding: 10px 14px 11px 13px; }
.g-quick h2 { position: relative; }
.g-quick h2 svg { position: absolute; right: 5px; top: 2px; width: 13px; height: 13px; }
.gallery { flex: 1; display: flex; border: 1px solid #8a8a8a; border-radius: 5px; overflow: hidden; }
.cells { flex: 1; display: grid; grid-template-columns: 164px 1fr; grid-template-rows: repeat(3, 1fr); padding-left: 4px; background: #d4d4d4; color: #333; }
.cells button { display: flex; align-items: center; gap: 6px; white-space: nowrap; }
.cells svg { width: 22px; height: 22px; }
.cells .off { color: #999; }
.gscroll { display: flex; flex-direction: column; width: 21px; background: #8a8a8a; gap: 1px; }
.gscroll button { flex: 1; display: flex; align-items: center; justify-content: center; background: #4d4d4d; color: #aaa; }
.gscroll .lit { color: #fff; }
.gscroll svg { width: 12px; height: 12px; }
.g-move { width: 212px; } .g-move .items { padding-left: 10px; }
.g-tags { width: 231px; } .g-tags .items { padding-left: 9px; }
.g-find { width: 169px; } .g-find .items { padding-left: 12px; }
.g-find input { width: 146px; height: 29px; padding: 0 4px; background: none; border: 1px solid #8a8a8a; border-radius: 5px; outline: 0; }
.g-find input::placeholder { color: #c8c8c8; opacity: 1; }
.g-find .stack button { padding-left: 6px; }
.g-find .stack button:nth-of-type(1) { margin-top: 2px; }
.g-speech { width: 79px; }
.g-drive { width: 119px; } .g-drive .items { padding-left: 9px; }
.g-wund { width: 166px; } .g-wund .items { padding-left: 10px; }
.fold { margin: auto 11px 10px auto; }
.fold svg { width: 18px; height: 18px; }

.panes { flex: 1; display: grid; grid-template-columns: 320px 419px 1fr; min-height: 0; margin-top: 9px; background: #666; border: 1px solid #8a8a8a; border-bottom: 0; border-radius: 9px 9px 0 0; overflow: hidden; }
.folders { background: #3c3c3c; padding: 21px 28px 0 4px; overflow: hidden; position: relative; border-right: 1px solid #707070; }
.collapse { position: absolute; right: 12px; top: 9px; }
.collapse svg { width: 13px; height: 14px; }
h3 { display: flex; align-items: center; gap: 3px; height: 32px; padding-left: 6px; font-size: 19px; white-space: nowrap; color: #e8e8e8; }
h3.gap { margin-top: 23px; }
h3 svg { width: 13px; height: 16px; }
.rot { transform: rotate(90deg); }
hr { margin: 9px -22px 12px 0; border: 0; border-top: 1px solid #4a4a4a; }
.folders li { display: flex; align-items: center; height: 33px; padding-left: 22px; }
.folders li span { margin-left: auto; padding-right: 11px; color: #cfe2f3; }
.folders li svg { width: 11px; height: 14px; margin: 0 2px 0 -13px; }
.sel-row { background: #666; font-weight: 700; }
.list { padding: 25px 0 0 40px; border-right: 1px solid #858585; }
.list-head { display: flex; align-items: center; height: 38px; }
.list-head > a { align-self: stretch; margin-right: 22px; font-size: 18px; line-height: 30px; color: #dfdfdf; border-bottom: 2px solid transparent; }
.list-head .on { color: #cfe2f3; border-color: #d6eaff; }
.by { display: flex; align-items: center; gap: 6px; margin: 0 24px 6px auto; }
.by .dd { width: 15px; height: 15px; }
.list-head .ib { margin: 0 44px 6px 0; }
.list-head .ib svg { width: 16px; height: 20px; }
.list p { margin: 4px 0 0 32px; font-size: 14px; line-height: 22px; }

.status { display: flex; align-items: center; gap: 16px; height: 30px; flex: none; padding: 0 11px 0 10px; background: #383838; font-size: 14px; white-space: nowrap; }
.grow { flex: 1; }
.conn { margin-left: 4px; }
.disp { display: flex; align-items: center; gap: 4px; margin-left: 12px; }
.disp svg, .view svg { width: 21px; height: 21px; }
.view { display: flex; align-items: center; justify-content: center; width: 54px; height: 29px; }
.view.on { background: #474747; }
.view + .view { margin-left: -16px; }
.zm { width: 12px; margin: 0 -10px; color: #888; font-size: 17px; text-align: center; }
.status input { appearance: none; width: 135px; height: 16px; margin: 0 2px; background: linear-gradient(#a0a0a0, #a0a0a0) center / 100% 2px no-repeat; }
.status input::-webkit-slider-thumb { appearance: none; width: 2px; height: 16px; background: #bbb; }
.pct { margin-left: 8px; color: #777; }

.share { position: absolute; left: 59.100%; top: 38.200%; display: flex; align-items: center; width: 544px; height: 59px; padding-left: 15px; background: #2b2c30; box-shadow: 0 2px 6px #0007; white-space: nowrap; font-size: 15px; }
.share svg { width: 9px; height: 22px; }
.share span { flex: 1; margin-left: 14px; }
.share button { width: 139px; height: 44px; border-radius: 5px; background: #8ab4f8; color: #202124; font-size: 15px; }
.share a { margin: 0 15px 0 14px; color: #8ab4f8; }
```
